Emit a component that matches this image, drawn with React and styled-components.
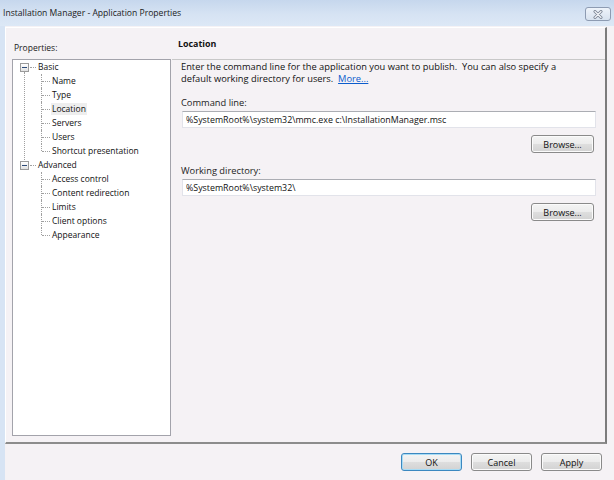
import React from 'react';
import styled, { createGlobalStyle, css } from 'styled-components';

const Global = createGlobalStyle`
  html, body { margin: 0; padding: 0; }
  body {
    width: 614px; height: 480px; overflow: hidden;
    background: #f5f2f5;
    font-family: "Open Sans", "Liberation Sans", sans-serif;
    font-size: 8.5px; color: #000;
  }
`;

const Window = styled.div`
  width: 614px; height: 480px;
  display: flex; flex-direction: column;
`;

const TitleBar = styled.div`
  height: 26px; flex: none;
  display: flex; align-items: center; justify-content: space-between;
  padding: 0 3px;
  box-sizing: border-box;
  background: linear-gradient(#c6d7ed, #d6e3f3 55%, #dce8f6);
`;

const Title = styled.span`
  font-size: 8.6px; color: #1a1a1a;
`;

const CloseButton = styled.div`
  width: 26px; height: 14px; box-sizing: border-box; margin-top: 2px;
  border: 1px solid #8d9bb2; border-radius: 3px;
  background: linear-gradient(#eef3fa, #d8e2ef);
  display: flex; align-items: center; justify-content: center;
`;

const Frame = styled.div`
  flex: 1; display: flex; flex-direction: column;
  border-left: 5px solid #d7e4f4;
  background: #f5f2f5;
`;

const Panel = styled.div`
  margin-top: 1px; margin-right: 7px;
  height: 417px; box-sizing: border-box;
  border-top: 1px solid #ffffff; border-left: 1px solid #ffffff;
  border-right: 2px solid #7c7c7c; border-bottom: 2px solid #8c8c8c;
  display: flex;
`;

const Sidebar = styled.div`
  width: 166px; flex: none;
  padding: 14px 0 0 6px; box-sizing: border-box;
`;

const SideLabel = styled.div`
  line-height: 12px; margin-left: 2px; color: #1a1a1a;
`;

const TreeBox = styled.div`
  margin-top: 5px;
  width: 159px; height: 377px; box-sizing: border-box;
  border: 1px solid #a3a3ab;
  background: #ffffff;
`;

const RootRow = styled.div`
  height: 14px; display: flex; align-items: center;
  padding-left: 7px;
`;

const Expander = styled.span`
  width: 9px; height: 9px; box-sizing: border-box; flex: none;
  border: 1px solid #9b9b9b;
  background: linear-gradient(#ffffff, #e2e2e2);
  display: flex; align-items: center; justify-content: center;
  &::after {
    content: ''; width: 5px; height: 1px; background: #2c4a78;
  }
`;

const Dash = styled.span`
  width: 6px; margin-left: 1px; height: 0; flex: none;
  border-top: 1px dotted #a0a0a0;
`;

const Children = styled.div`
  position: relative;
  ${p => p.$continues && css`
    &::before {
      content: ''; position: absolute; left: 11px; top: -2px; bottom: -2px;
      border-left: 1px dotted #a0a0a0;
    }
  `}
`;

const ChildRow = styled.div`
  height: 14px; display: flex; align-items: center;
  padding-left: 28px;
`;

const Connector = styled.span`
  position: relative; width: 10px; height: 14px; flex: none;
  &::before {
    content: ''; position: absolute; left: 0; top: 0;
    height: ${p => (p.$last ? '7px' : '14px')};
    border-left: 1px dotted #a0a0a0;
  }
  &::after {
    content: ''; position: absolute; left: 1px; top: 7px; width: 8px;
    border-top: 1px dotted #a0a0a0;
  }
`;

const NodeLabel = styled.span`
  margin-left: ${p => (p.$root ? '1px' : '0')};
  padding: 0 1px; line-height: 12px; white-space: nowrap; color: #111;
  background: ${p => (p.$selected ? '#eeeeee' : 'transparent')};
`;

const Page = styled.div`
  flex: 1; display: flex; flex-direction: column;
`;

const PageHeader = styled.div`
  height: 31px; flex: none;
  display: flex; align-items: center;
  padding-left: 6px;
  border-bottom: 1px solid #c8c8c8;
  font-weight: 700; font-size: 8.9px; color: #111;
`;

const PageBody = styled.div`
  padding: 1px 9px 0 9px;
  display: flex; flex-direction: column;
  font-size: 9.3px;
`;

const Description = styled.p`
  margin: 0; line-height: 12px; color: #111; white-space: nowrap;
`;

const Link = styled.a`
  color: #0b5ccc; text-decoration: underline; cursor: pointer;
`;

const FieldLabel = styled.div`
  margin-top: 12px; line-height: 12px; color: #222;
`;

const TextInput = styled.input`
  margin: 2px 0 0 1px;
  height: 17px; box-sizing: border-box;
  border: 1px solid #e2e3ea; border-top-color: #abadb3;
  background: #ffffff;
  padding: 0 0 0 3px;
  font: inherit; font-size: 8.85px; color: #111;
  outline: none;
`;

const BrowseRow = styled.div`
  margin-top: ${p => p.$gap}px;
  display: flex; justify-content: flex-end;
  padding-right: 2px;
`;

const Button = styled.button`
  width: ${p => p.$w || 61}px; height: 18px; box-sizing: border-box; padding: 0;
  font: inherit; font-size: 9px; color: #111;
  border: 1px solid ${p => (p.$primary ? '#3c88c0' : '#8a8a8a')};
  border-radius: 3px;
  background: linear-gradient(#f4f4f4 0%, #ececec 48%, #dedede 52%, #d2d2d2 100%);
  box-shadow: inset 0 0 0 1px ${p => (p.$primary ? '#a8dcf5' : '#fbfbfb')};
`;

const ButtonRow = styled.div`
  flex: 1; display: flex; justify-content: flex-end; align-items: flex-start;
  gap: 9px; padding: 9px 12px 0 0;
`;

const basic = ['Name', 'Type', 'Location', 'Servers', 'Users', 'Shortcut presentation'];
const advanced = ['Access control', 'Content redirection', 'Limits', 'Client options', 'Appearance'];

function TreeGroup({ label, items, continues, selected }) {
  return (
    <>
      <RootRow>
        <Expander />
        <Dash />
        <NodeLabel $root>{label}</NodeLabel>
      </RootRow>
      <Children $continues={continues}>
        {items.map((it, i) => (
          <ChildRow key={it}>
            <Connector $last={i === items.length - 1} />
            <NodeLabel $selected={it === selected}>{it}</NodeLabel>
          </ChildRow>
        ))}
      </Children>
    </>
  );
}

export default function App() {
  return (
    <Window>
      <Global />
      <TitleBar>
        <Title>Installation Manager - Application Properties</Title>
        <CloseButton>
          <svg width="12" height="9" viewBox="0 0 12 9">
            <path d="M3 1.5 L9 7.5 M9 1.5 L3 7.5" stroke="#7b8494" strokeWidth="3" strokeLinecap="round" fill="none" />
            <path d="M3 1.5 L9 7.5 M9 1.5 L3 7.5" stroke="#f2f4f8" strokeWidth="1.3" strokeLinecap="round" fill="none" />
          </svg>
        </CloseButton>
      </TitleBar>
      <Frame>
        <Panel>
          <Sidebar>
            <SideLabel>Properties:</SideLabel>
            <TreeBox>
              <TreeGroup label="Basic" items={basic} continues selected="Location" />
              <TreeGroup label="Advanced" items={advanced} />
            </TreeBox>
          </Sidebar>
          <Page>
            <PageHeader>Location</PageHeader>
            <PageBody>
              <Description>
                Enter the command line for the application you want to publish.&nbsp; You can also specify a
                <br />
                default working directory for users.&nbsp; <Link>More...</Link>
              </Description>
              <FieldLabel>Command line:</FieldLabel>
              <TextInput readOnly value="%SystemRoot%\system32\mmc.exe c:\InstallationManager.msc" />
              <BrowseRow $gap={7}>
                <Button $w={63}>Browse...</Button>
              </BrowseRow>
              <FieldLabel>Working directory:</FieldLabel>
              <TextInput readOnly value="%SystemRoot%\system32\" />
              <BrowseRow $gap={7}>
                <Button $w={63}>Browse...</Button>
              </BrowseRow>
            </PageBody>
          </Page>
        </Panel>
        <ButtonRow>
          <Button $primary>OK</Button>
          <Button>Cancel</Button>
          <Button>Apply</Button>
        </ButtonRow>
      </Frame>
    </Window>
  );
}
